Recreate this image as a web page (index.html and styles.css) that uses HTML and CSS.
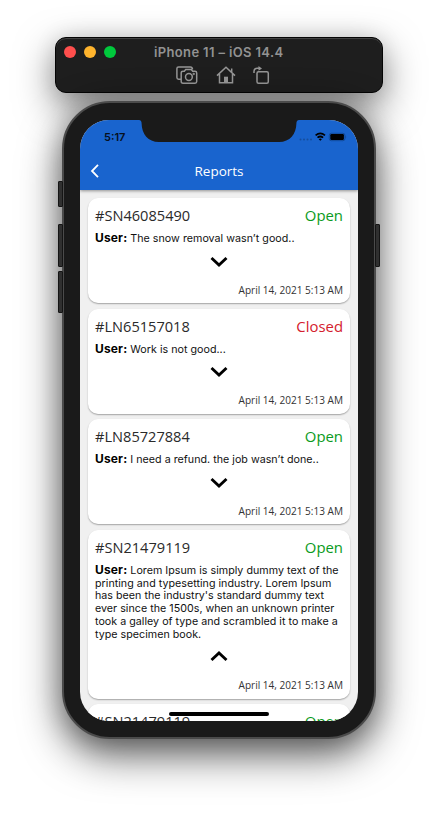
FILE: index.html
```html
<!DOCTYPE html>
<html lang="en">
<head>
<meta charset="utf-8">
<title>Reports</title>
<link rel="stylesheet" href="styles.css">
</head>
<body>
<main class="simulator">
  <header class="toolbar">
    <div class="title-row">
      <div class="lights"><i class="red"></i><i class="amber"></i><i class="green"></i></div>
      <h1 class="window-title">iPhone 11 – iOS 14.4</h1>
    </div>
    <div class="tools">
      <svg width="22" height="19" viewBox="0 0 22 19"><path d="M4.5 13.3H2.6Q.9 13.3.9 11.600V2.600Q.9.900 2.600.900H14.500Q16.200.900 16.600 3.300M7 5.200H8.300L9.700 3.600H15.300L16.700 5.200H19Q20.700 5.200 20.700 6.900V15.600Q20.700 17.300 19 17.300H7Q5.200 17.300 5.200 15.600V6.900Q5.200 5.200 7 5.200Z"/><circle cx="12.900" cy="11" r="3.400"/><circle cx="17.700" cy="8" r=".4"/></svg>
      <svg width="20" height="19" viewBox="0 0 20 19"><path d="M1 9.600 10 1.200 19 9.600M3.500 8V16.800H16.500V8M15.700 6.200V2.400"/><path class="solid" d="M8 17V10.700H12V17Z"/></svg>
      <svg width="17" height="19" viewBox="0 0 17 19"><rect x="4" y="5.700" width="11.300" height="11.500" rx="1.500"/><path d="M1 7V5.600Q1 2.300 4.300 2.300H6.500"/><path class="solid" d="M5.500 0 9 2.400 5.500 4.800Z"/></svg>
    </div>
  </header>

  <section class="phone">
    <i class="key mute"></i><i class="key vol-up"></i><i class="key vol-down"></i><i class="key power"></i>
    <div class="screen">
      <header class="app-bar">
        <div class="status">
          <span class="clock">5:17</span>
          <svg class="signals" width="48" height="10" viewBox="0 0 48 10">
            <g class="dots"><circle cx="1.500" cy="7.600" r="1"/><circle cx="5" cy="7.600" r="1"/><circle cx="8.500" cy="7.600" r="1"/><circle cx="12" cy="7.600" r="1"/></g>
            <path class="wave" d="M16.600 3.400Q21.300-.7 26 3.400M18.500 5.700Q21.300 3.300 24.100 5.700"/><path d="M19.700 7.200Q21.300 6 22.900 7.200L21.300 8.800Z"/>
            <rect class="cell" x="30.300" y="1.300" width="15.600" height="7.400" rx="2"/><rect x="31.300" y="2.100" width="13.600" height="5.800" rx="1.200"/><path class="tip" d="M46.500 3.600Q48 5 46.500 6.400Z"/>
          </svg>
        </div>
        <div class="nav">
          <svg width="10" height="14" viewBox="0 0 10 14"><path d="M8 .8 2 7 8 13.200"/></svg>
          <h2>Reports</h2>
        </div>
      </header>
      <div class="reports">
        <article class="card">
          <div class="head"><h3>#SN46085490</h3><span class="open">Open</span></div>
          <p><b>User:</b> The snow removal wasn’t good..</p>
          <svg class="chevron" viewBox="0 0 18 12"><path d="M1.500 2 9 9 16.500 2"/></svg>
          <time>April 14, 2021 5:13 AM</time>
        </article>
        <article class="card">
          <div class="head"><h3>#LN65157018</h3><span class="closed">Closed</span></div>
          <p><b>User:</b> Work is not good...</p>
          <svg class="chevron" viewBox="0 0 18 12"><path d="M1.500 2 9 9 16.500 2"/></svg>
          <time>April 14, 2021 5:13 AM</time>
        </article>
        <article class="card">
          <div class="head"><h3>#LN85727884</h3><span class="open">Open</span></div>
          <p><b>User:</b> I need a refund. the job wasn’t done..</p>
          <svg class="chevron" viewBox="0 0 18 12"><path d="M1.500 2 9 9 16.500 2"/></svg>
          <time>April 14, 2021 5:13 AM</time>
        </article>
        <article class="card expanded">
          <div class="head"><h3>#SN21479119</h3><span class="open">Open</span></div>
          <p><b>User:</b> Lorem Ipsum is simply dummy text of the<br>printing and typesetting industry. Lorem Ipsum<br>has been the industry's standard dummy text<br>ever since the 1500s, when an unknown printer<br>took a galley of type and scrambled it to make a<br>type specimen book.</p>
          <svg class="chevron" viewBox="0 0 18 12"><path d="M1.500 9 9 2 16.500 9"/></svg>
          <time>April 14, 2021 5:13 AM</time>
        </article>
        <article class="card">
          <div class="head"><h3>#SN21479119</h3><span class="open">Open</span></div>
        </article>
      </div>
      <svg class="notch" width="160" height="22" viewBox="0 0 160 22"><path d="M0 0Q2.600.2 2.600 3.500C2.800 14 9 22 20 22H140C151 22 157.200 14 157.400 3.500Q157.400.2 160 0Z"/></svg>
      <i class="home-bar"></i>
    </div>
  </section>
</main>
</body>
</html>
```
FILE: styles.css
```css
* { box-sizing: border-box; }
body { margin: 0; width: 438px; height: 813px; overflow: hidden; background: #fff; font-family: "Open Sans", sans-serif; }
h1, h2, h3, p { margin: 0; font-weight: 400; }
svg { display: block; }
.simulator { padding: 37px 55px 0; }

.toolbar { height: 56px; border: 1px solid #050505; border-radius: 11px; background: #1e1e1e; box-shadow: inset 0 1px #414141, 0 14px 38px rgba(0,0,0,.5), 0 0 22px rgba(0,0,0,.1); }
.title-row { display: flex; align-items: center; height: 28px; padding-left: 8px; }
.lights { display: flex; gap: 8px; }
.lights i { width: 12px; height: 12px; border-radius: 50%; }
.red { background: #ff4f4d; }
.amber { background: #ffb42d; }
.green { background: #00c93c; }
.window-title { margin-left: 38px; font: 600 13px/16px Inter, sans-serif; letter-spacing: .36px; color: #929292; white-space: nowrap; }
.tools { display: flex; padding-left: 120px; gap: 17.500px; }
.tools svg { fill: none; stroke: #969696; stroke-width: 1.500; }
.tools .solid { fill: #969696; stroke: none; }

.phone { position: relative; width: 314px; height: 638px; margin: 8px 0 0 7px; padding: 17px 16px; border: 2px solid #4b4b4b; border-radius: 48px; background: #1a1a1a; box-shadow: 0 16px 42px rgba(0,0,0,.62), 0 4px 26px rgba(0,0,0,.22); }
.key { position: absolute; width: 5px; left: -6px; background: #303030; border: 1px solid #151515; border-radius: 1px; }
.mute { top: 78px; height: 26px; }
.vol-up { top: 121px; height: 43px; }
.vol-down { top: 168px; height: 42px; }
.power { top: 121px; left: 311px; height: 43px; }
.screen { position: relative; width: 278px; height: 601px; overflow: hidden; border-radius: 29px; background: #f0f0f0; }
.app-bar { position: relative; height: 70px; background: #1964ce; box-shadow: 0 1px 3px rgba(0,0,0,.4); }
.status { display: flex; justify-content: space-between; padding: 11px 11px 0 24px; height: 34px; }
.clock { font: 600 11px/12px Inter, sans-serif; color: #06101d; }
.signals { margin-top: .5px; }
.signals .dots { fill: #164e9d; }
.signals .wave { fill: none; stroke: #000; stroke-width: 1.700; }
.signals .cell { fill: none; stroke: #10458e; stroke-width: .8; }
.signals .tip { fill: #10458e; }
.nav { display: grid; grid-template-columns: 10px 1fr 10px; align-items: center; height: 34px; padding: 0 10px; }
.nav svg { fill: none; stroke: #fff; stroke-width: 1.800; }
.nav h2 { text-align: center; font-size: 13.500px; line-height: 20px; color: #fff; }
.reports { display: grid; gap: 5.700px; padding: 8px; }
.card { display: flex; flex-direction: column; height: 105px; padding: 7px 7px 0; border-radius: 10px; background: #fff; box-shadow: 0 1px 1.500px rgba(0,0,0,.32); }
.card.expanded { height: 168.500px; }
.head { display: flex; justify-content: space-between; font-size: 14.900px; line-height: 21px; color: #2a2a2a; }
.head h3 { font-size: 14.600px; }
.open { color: #0b9b22; }
.closed { color: #d4202d; }
.card p { margin-top: 6px; font: 400 10.700px/12.700px Inter, sans-serif; letter-spacing: .02px; color: #111; white-space: nowrap; }
.card b { font-size: 12px; font-weight: 700; line-height: 12px; letter-spacing: .15px; color: #000; }
.chevron { width: 18px; height: 12px; margin: 10px auto 0; flex: none; fill: none; stroke: #000; stroke-width: 2.900; }
.card time { margin-top: 15px; text-align: right; font-size: 10.050px; line-height: 14px; color: #333; }
.notch { position: absolute; top: 0; left: 59px; fill: #1a1a1a; }
.home-bar { position: absolute; left: 89px; bottom: 5px; width: 100px; height: 4px; border-radius: 2px; background: #000; }
```
